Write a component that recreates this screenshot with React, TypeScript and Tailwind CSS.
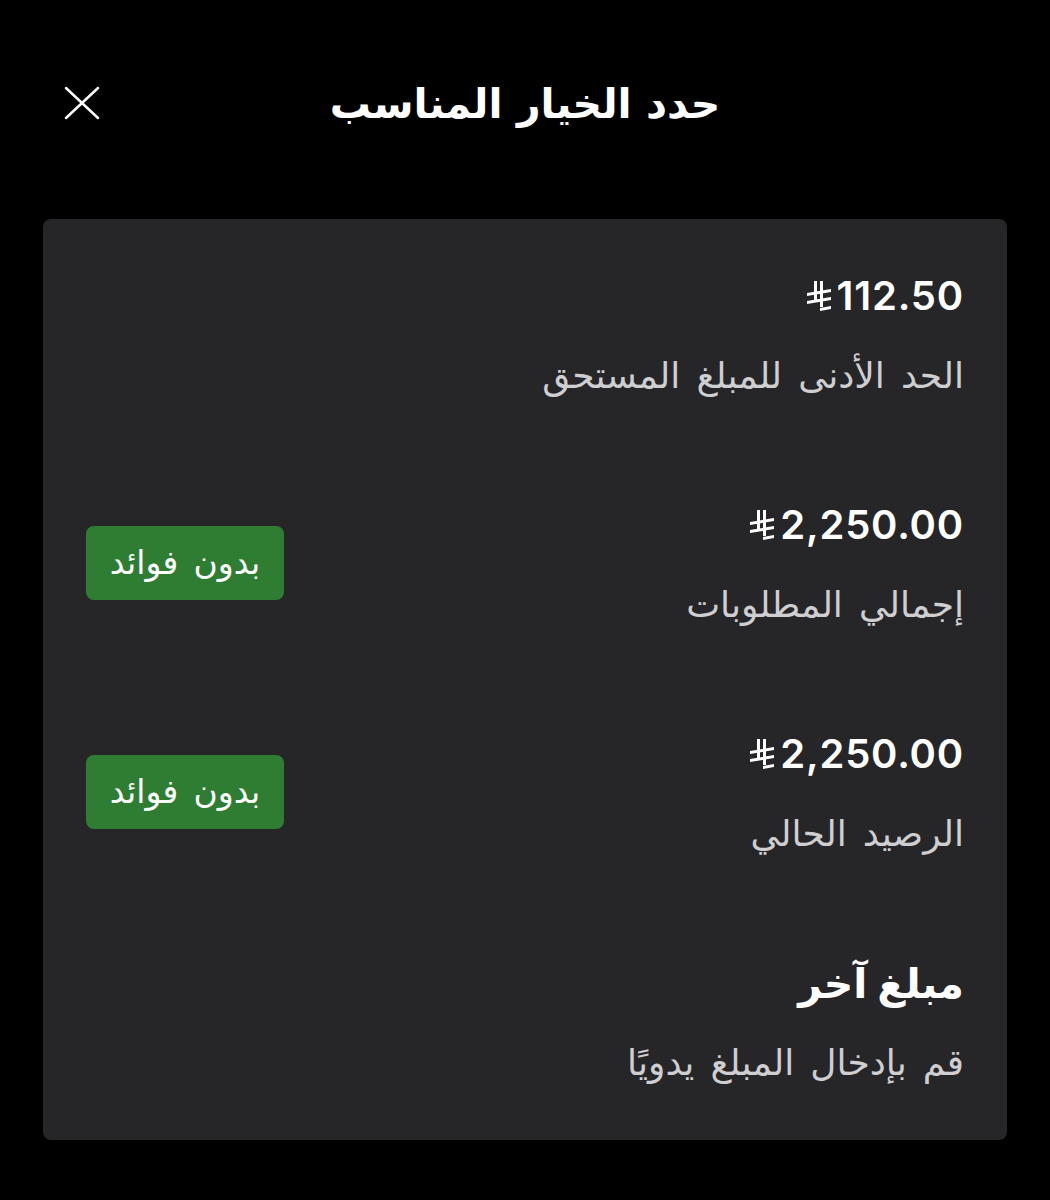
import React from 'react';

const arabicFont = { fontFamily: '"Inter", "DejaVu Sans", "Noto Sans Arabic", sans-serif' };

function RiyalSign() {
  return (
    <svg viewBox="0 0 24 30" className="h-[30px] w-[24px]" fill="currentColor">
      <rect x="7" y="0" width="3" height="20" />
      <rect x="13" y="0" width="3" height="26" />
      <polygon points="0,12 24,8 24,11 0,15" />
      <polygon points="0,20 24,16 24,19 0,23" />
      <polygon points="13,27 24,25 24,28 13,30" />
    </svg>
  );
}

function Amount({ value }: { value: string }) {
  return (
    <div dir="ltr" className="flex h-[46px] items-center justify-end gap-[6px] text-white">
      <RiyalSign />
      <span className="text-[40px] font-semibold leading-[46px] tracking-[0.8px]">{value}</span>
    </div>
  );
}

function Badge() {
  return (
    <div className="flex h-[74px] w-[198px] items-center justify-center rounded-lg bg-[#2e7d32] text-[33px] text-white [word-spacing:6px]">
      بدون فوائد
    </div>
  );
}

const rows = [
  { amount: '112.50', label: 'الحد الأدنى للمبلغ المستحق', badge: false },
  { amount: '2,250.00', label: 'إجمالي المطلوبات', badge: true },
  { amount: '2,250.00', label: 'الرصيد الحالي', badge: true },
];

export default function App() {
  return (
    <div className="min-h-[1200px] w-full bg-black pt-[80px]" style={arabicFont}>
      <div className="grid h-[46px] grid-cols-[1fr_auto_1fr] items-center px-[64px]">
        <svg viewBox="0 0 36 34" className="h-[34px] w-[36px] text-white" fill="none" stroke="currentColor" strokeWidth="2.5" strokeLinecap="round">
          <line x1="2" y1="2" x2="34" y2="32" />
          <line x1="34" y1="2" x2="2" y2="32" />
        </svg>
        <h1 dir="rtl" className="text-[41px] font-semibold leading-[46px] text-white [word-spacing:4px]">حدد الخيار المناسب</h1>
        <div />
      </div>

      <div dir="rtl" className="mx-[43px] mt-[93px] flex flex-col gap-[107px] rounded-lg bg-[#262628] px-[43px] pt-[54px] pb-[58px]">
        {rows.map((row, i) => (
          <div key={i} className="flex items-center justify-between">
            <div className="flex flex-col gap-[36px]">
              <Amount value={row.amount} />
              <div className="text-[36px] leading-[40px] text-[#cfcfd1] [word-spacing:6px]">{row.label}</div>
            </div>
            {row.badge && <Badge />}
          </div>
        ))}
        <div className="flex flex-col gap-[36px]">
          <div className="text-[41px] font-bold leading-[46px] text-white">مبلغ آخر</div>
          <div className="text-[36px] leading-[40px] text-[#cfcfd1] [word-spacing:6px]">قم بإدخال المبلغ يدويًا</div>
        </div>
      </div>
    </div>
  );
}
